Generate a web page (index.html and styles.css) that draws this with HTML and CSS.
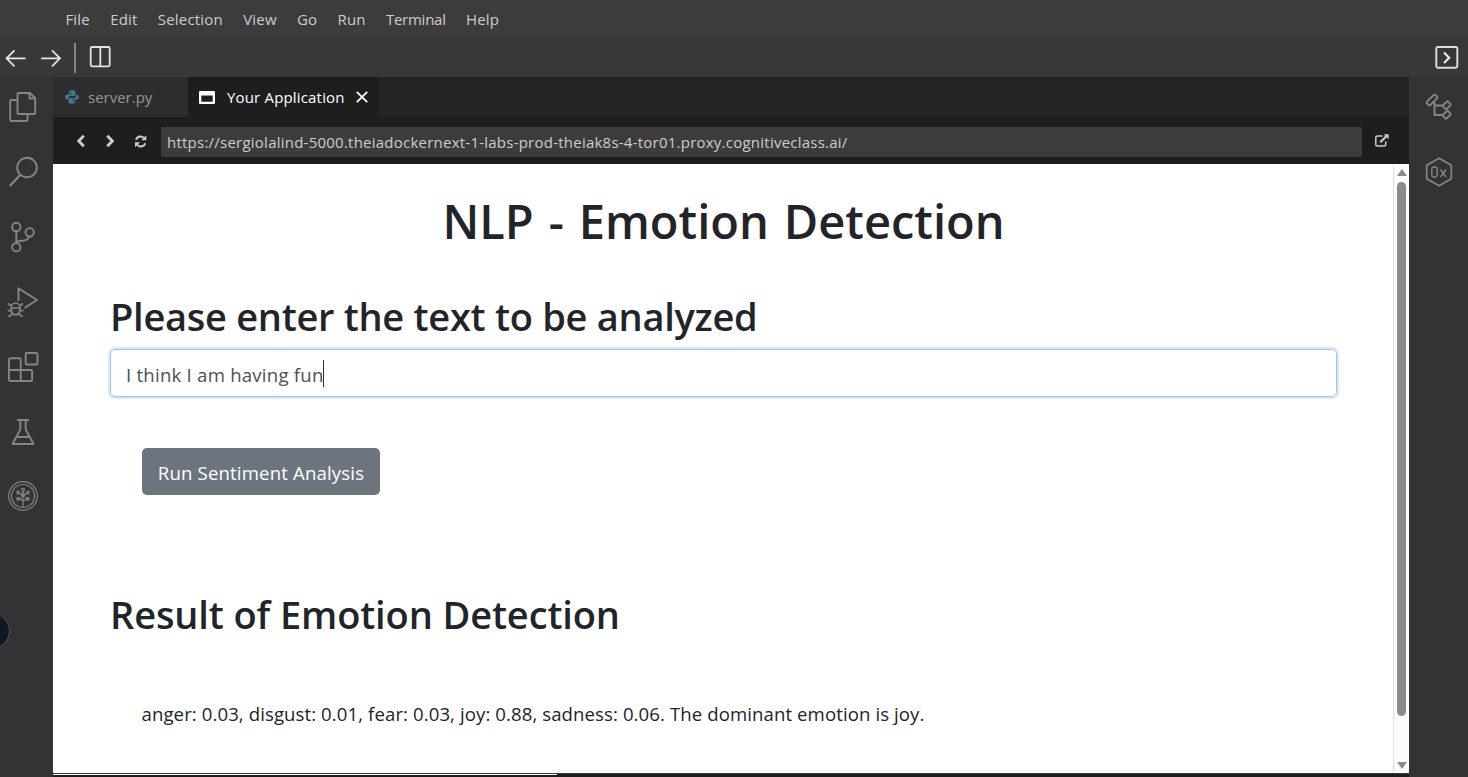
FILE: index.html
```html
<!DOCTYPE html>
<html lang="en">
<head>
<meta charset="utf-8">
<title>Your Application</title>
<link rel="stylesheet" href="styles.css">
</head>
<body>
<div class="ide">
  <nav class="menubar">
    <span>File</span><span>Edit</span><span>Selection</span><span>View</span><span>Go</span><span>Run</span><span class="m-terminal">Terminal</span><span>Help</span>
  </nav>
  <div class="toolbar">
    <svg class="tb-nav" width="100" height="39" viewBox="0 38 100 39"><g fill="none" stroke="#e4e4e4" stroke-width="1.8"><path d="M25.500 58.300H7M14.500 50.300l-8 8 8 8M41 58.300h18.500M52 50.300l8 8-8 8"/></g><path d="M75 43v30" stroke="#858585" stroke-width="2"/></svg>
    <svg class="tb-split" width="24" height="39" viewBox="88 38 24 39"><rect x="90.700" y="47" width="19" height="19.300" rx="1.500" fill="none" stroke="#e4e4e4" stroke-width="1.800"/><path d="M100.300 47v19.500" stroke="#e4e4e4" stroke-width="1.800"/></svg>
    <svg class="tb-end" width="34" height="39" viewBox="1434 38 34 39"><rect x="1436.300" y="47" width="21" height="20.700" rx="1.500" fill="none" stroke="#dedede" stroke-width="1.900"/><path d="M1444 52.500l5.200 5.300-5.200 5.300" fill="none" stroke="#eee" stroke-width="2.100"/></svg>
  </div>
  <div class="workbench">
    <aside class="activity">
      <svg width="53" height="480" viewBox="0 77 53 480" fill="none" stroke="#858585" stroke-width="1.900" stroke-linejoin="round">
        <path d="M18.500 93h11.500l5.200 5.200V113a1 1 0 0 1-1 1H18.500a1 1 0 0 1-1-1V94a1 1 0 0 1 1-1zM29.500 93v5.500h5.500M17 100h-5.500a1.300 1.300 0 0 0-1.300 1.300v18.400a1.300 1.300 0 0 0 1.300 1.300h14.700a1.300 1.300 0 0 0 1.300-1.300V114"/>
        <circle cx="27" cy="167.500" r="9.800"/><path d="M20.200 175L9.800 186" stroke-width="2.200"/>
        <circle cx="16.300" cy="227" r="4.200"/><circle cx="16.300" cy="247.200" r="4.200"/><circle cx="29.700" cy="232.300" r="4.200"/><path d="M16.300 231.300v11.600M29.200 236.700c-1.200 3-3.500 4-7 4-3 0-5.500.5-5.700 2.300"/>
        <path d="M18.500 301v-12.800L37 300l-12.500 8"/><path d="M11.300 307.300a4.300 4.300 0 0 1 8.600 0v4a4.400 4.400 0 0 1-8.600 0zM11 308h9.300M8 303.500l3.500 2.700M23 303.500l-3.300 2.700M7.800 310.700h3.500M20 310.700h3.500M8.500 316.800l3.400-2.600M22.700 316.800l-3.400-2.600" stroke-width="1.700"/>
        <path d="M20.700 370V359.500a1.300 1.300 0 0 0-1.300-1.300h-9.200A1.300 1.300 0 0 0 9 359.500v20.200a1.300 1.300 0 0 0 1.300 1.300h20.500a1.300 1.300 0 0 0 1.300-1.300v-8.400a1.300 1.300 0 0 0-1.300-1.300H9M20.700 370v11"/><rect x="25.700" y="353" width="11.800" height="11.500" rx="1.300"/>
        <path d="M17 420h12M20.300 420v9.500L12.500 444h21L25.700 429.500V420M16.500 437h13"/>
        <g stroke-width="1.200"><circle cx="23" cy="496" r="14.300"/><circle cx="23" cy="496" r="11.500"/><path d="M23 490v17M23 501l-5-3M23 501l5-3M23 496l-5-3.500M23 496l5-3.500M17 498h4M25 498h4"/><circle cx="23" cy="489.800" r="1.500"/><circle cx="18" cy="492.500" r="1.300"/><circle cx="28" cy="492.500" r="1.300"/><circle cx="18" cy="499" r="1.300"/><circle cx="28" cy="499" r="1.300"/><circle cx="23" cy="495" r="1.600"/></g>
      </svg>
      <div class="bubble"></div>
    </aside>
    <main class="editor">
      <div class="tabs">
        <div class="tab tab-server">
          <svg width="14" height="14" viewBox="0 0 14 14"><path fill="#457b96" d="M7 .3c-2.400 0-3.200.9-3.200 2v1.500h3.400v.7H2.300C.9 4.500.3 5.600.3 7s.7 2.600 1.900 2.600h1.200V8c0-1.200.9-2 2-2h3.300c1 0 1.700-.8 1.700-1.700v-2C10.400 1 9.300.3 7 .3z"/><path fill="#457b96" d="M7 13.700c2.400 0 3.200-.9 3.200-2v-1.500H6.800v-.7h4.900c1.400 0 2-1.100 2-2.500s-.7-2.600-1.900-2.600h-.7V6c0 1.200-.9 2-2 2H5.300c-1 0-1.700.8-1.700 1.700v2c0 1.300 1.100 2 3.400 2z"/><circle cx="5.300" cy="2.400" r=".7" fill="#2d2d2d"/><circle cx="8.700" cy="11.600" r=".7" fill="#2d2d2d"/></svg>
          <span>server.py</span>
        </div>
        <div class="tab tab-app">
          <svg width="16" height="13" viewBox="0 0 16 13"><path fill="#fff" fill-rule="evenodd" d="M1 0h14q1 0 1 1v11q0 1-1 1H1q-1 0-1-1V1Q0 0 1 0zM2.300 4.500v6.200h11.400V4.500z"/></svg>
          <span class="t-app">Your Application</span>
          <svg class="close" width="12" height="12" viewBox="0 0 12 12"><path d="M.8.800l10.400 10.400M11.200.800L.8 11.200" stroke="#fff" stroke-width="1.800"/></svg>
        </div>
      </div>
      <div class="address">
        <svg width="95" height="47" viewBox="66 117 95 47" fill="none" stroke="#ccc" stroke-width="2.900"><path d="M83.800 135.800l-5 5.200 5 5.200M107.300 135.800l5 5.200-5 5.200"/><path stroke-width="2.100" d="M136 139.800a4.700 4.700 0 0 1 8-1.700M145.300 143.200a4.700 4.700 0 0 1-8 1.700"/><path fill="#ccc" stroke="none" d="M146.300 135.300v5h-5zM135 147.300v-5h5z"/></svg>
        <div class="url"><span>https://sergiolalind-5000.theiadockernext-1-labs-prod-theiak8s-4-tor01.proxy.cognitiveclass.ai/</span></div>
        <svg class="external" width="14" height="13" viewBox="0 0 14 13"><path d="M7.500 2H2.200Q.8 2 .8 3.400v7q0 1.500 1.500 1.500h7q1.400 0 1.400-1.500V7.500" fill="none" stroke="#ccc" stroke-width="1.500"/><path d="M5.300 8.200l6-6" stroke="#ccc" stroke-width="2.200"/><path d="M8.600.200h5v5z" fill="#ccc"/></svg>
      </div>
      <div class="viewport">
        <section class="page">
          <h1><span>NLP - Emotion Detection</span></h1>
          <h2 class="prompt"><span>Please enter the text to be analyzed</span></h2>
          <div class="field"><span>I think I am having fun</span><i class="caret"></i></div>
          <button class="run"><span>Run Sentiment Analysis</span></button>
          <h2 class="result"><span>Result of Emotion Detection</span></h2>
          <p class="output"><span>anger: 0.03, disgust: 0.01, fear: 0.03, joy: 0.88, sadness: 0.06. The dominant emotion is joy.</span></p>
        </section>
        <div class="scrollbar"><i class="up"></i><i class="thumb"></i><i class="down"></i></div>
      </div>
      <div class="bottom"><i></i></div>
    </main>
    <aside class="right">
      <svg width="59" height="120" viewBox="1409 77 59 120" fill="none" stroke="#858585" stroke-width="1.900" stroke-linejoin="round">
        <path d="M1427 101.700l6.700-6.700q.8-.8 1.600 0l1.700 1.700q.8.800 0 1.600l-6.700 6.700q-.8.800-1.600 0l-1.700-1.700q-.8-.8 0-1.600zM1434.500 102v13h8.500M1435 105.500h8.500M1442.700 105.500l4-3.800q.7-.7 1.400 0l2.200 2.200q.7.700 0 1.400l-3.600 3.500q-.7.700-1.400 0l-2.400-2.400zM1442.700 115l4-3.800q.7-.7 1.400 0l2.200 2.200q.7.700 0 1.400l-3.600 3.500q-.7.700-1.400 0l-2.400-2.400z"/>
        <path stroke-width="1.700" d="M1439 158.200l12.300 7v13.600l-12.300 7-12.300-7v-13.600z"/>
        <path stroke-width="1.400" d="M1440.500 169.500l5.500 7.500M1446 169.500l-5.500 7.500"/><rect x="1431.800" y="167" width="5.400" height="10" rx="2.200" stroke-width="1.400"/>
      </svg>
    </aside>
  </div>
</div>
</body>
</html>
```
FILE: styles.css
```css
* { box-sizing: border-box; }
body { margin: 0; overflow: hidden; font-family: "Open Sans", "Noto Sans", sans-serif; font-size: 15px; }
svg { display: block; flex: none; }
span { white-space: nowrap; }
.ide { width: 1468px; height: 777px; display: flex; flex-direction: column; background: #333; }
.menubar { height: 38px; background: #3c3c3c; color: #ccc; display: flex; align-items: center; padding: 0 0 0 65.4px; gap: 20.2px; letter-spacing: .2px; }
.m-terminal { letter-spacing: -.25px; }
.toolbar { height: 39px; background: #383838; display: flex; }
.tb-nav { margin-right: -12px; }
.tb-end { margin-left: auto; }
.workbench { flex: 1; display: flex; min-height: 0; }
.activity { width: 53px; background: #333; position: relative; overflow: hidden; }
.bubble { position: absolute; left: -26px; top: 536px; width: 36px; height: 36px; border-radius: 50%; background: #101828; border: 1px solid #475569; }
.editor { width: 1356px; display: flex; flex-direction: column; background: #1e1e1e; }
.tabs { height: 40px; background: #252526; display: flex; }
.tab { display: flex; align-items: center; }
.tab-server { width: 135px; background: #2d2d2d; color: #969696; padding-left: 12px; gap: 9px; }
.tab-app { width: 191px; background: #1e1e1e; color: #fff; padding-left: 11px; gap: 12px; }
.t-app { letter-spacing: .17px; }
.close { margin-left: -1px; }
.address { height: 47px; display: flex; align-items: center; padding-left: 13px; }
.url { width: 1201px; height: 30px; margin-top: 3px; background: #3c3c3c; color: #ccc; border-radius: 2px; padding-left: 6px; display: flex; align-items: center; letter-spacing: .235px; }
.external { margin-left: 13px; }
.viewport { height: 609px; display: flex; background: #fff; }
.page { width: 1341px; height: 609px; padding: 27px 56px 0 57px; color: #212529; border: solid #ddd; border-width: 0 1px 0 0; border-top-right-radius: 5px; }
h1, h2, p { margin: 0; }
h1, h2 { font-weight: 600; }
h1 { font-size: 47px; line-height: 61px; height: 106px; text-align: center; word-spacing: 2.8px; }
h2 { font-size: 38px; line-height: 48px; }
.prompt { margin-bottom: 4px; height: 48px; line-height: 39px; letter-spacing: -.28px; }
.field { height: 48px; border: 1px solid #9ac4ef; border-radius: 5px; box-shadow: 0 0 0 2px #d7e9fb; display: flex; align-items: center; padding: 2px 0 0 15px; font-size: 18.6px; letter-spacing: .23px; color: #495057; }
.caret { width: 1px; height: 27px; background: #333; margin-top: -2px; margin-left: -1px; }
.run { display: flex; align-items: center; justify-content: center; margin: 51px 0 0 32px; width: 238px; height: 47px; padding: 2px 0 0; border: 0; border-radius: 5px; background: #6c757d; color: #fff; font-family: inherit; font-size: 18.6px; letter-spacing: .16px; }
.result { margin-top: 95px; letter-spacing: -.12px; }
.output { margin: 61px 0 0 31.5px; font-size: 18.6px; line-height: 30px; letter-spacing: .09px; }
.scrollbar { width: 15px; background: #fcfcfc; display: flex; flex-direction: column; align-items: center; padding-top: 5px; }
.up { border: 5px solid transparent; border-top: 0; border-bottom: 7px solid #8b8b8b; }
.thumb { width: 9px; height: 534px; border-radius: 5px; background: #8b8b8b; margin-top: 6px; }
.down { border: 5px solid transparent; border-bottom: 0; border-top: 7px solid #8b8b8b; margin-top: 46px; }
.bottom { height: 4px; background: #1e1e1e; border-top: 1px solid #3a3a3a; }
.bottom i { display: block; width: 504px; height: 1px; background: #fff; }
.right { width: 59px; background: #333; }
```
